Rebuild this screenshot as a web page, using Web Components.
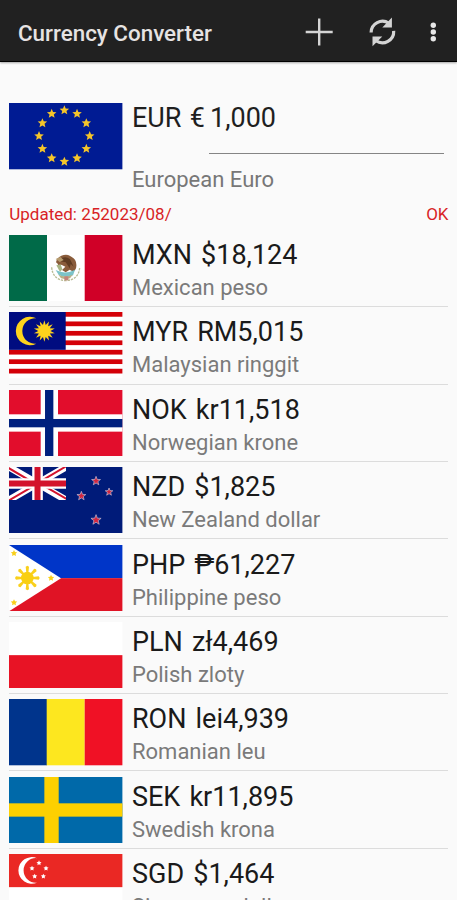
<!DOCTYPE html>
<html lang="en">
  <head>
    <meta charset="utf-8">
    <title>Currency Converter</title>
    <style>
      html, body { height: 100%; }
      body { margin: 0; overflow: hidden; background: #fafafa; font-family: Roboto, "Liberation Sans", sans-serif; }
      main { padding-top: 5.9px; }
    </style>
  </head>
  <body>
    <template id="app-bar-template">
      <style>
        :host { display: flex; align-items: center; box-sizing: border-box; height: 62px; padding: 4px 12px 0 18px;
          background: #212121; border-bottom: 1.5px solid #000; box-shadow: 0 1px 2px rgba(0, 0, 0, .35); color: #e6e3e3; }
        h1 { flex: 1; margin: 0; font-size: 22.4px; font-weight: 500; white-space: nowrap; }
        svg { display: block; flex: none; margin-bottom: 2px; }
      </style>
      <h1><slot></slot></h1>
      <svg width="64" height="40" viewBox="0 0 64 40"><path d="M32.2 6.5v27M18.7 20h27" stroke="#d4d4d4" stroke-width="2.4" fill="none"/></svg>
      <svg width="64" height="40" viewBox="0.7 0 64 40">
        <g fill="none" stroke="#d4d4d4" stroke-width="3.2">
          <path d="M20.8 20.6A11.4 11.4 0 0 1 38.6 11.2"/>
          <path d="M43.4 18.8A11.4 11.4 0 0 1 25.6 28.8"/>
        </g>
        <path fill="#d4d4d4" d="M41.6 5.6V15.4H32zM22.2 34.2V24.6H32z"/>
      </svg>
      <svg width="30" height="40" viewBox="0 0 30 40" fill="#e8e8e8">
        <circle cx="18.3" cy="13.2" r="2.7"/><circle cx="18.3" cy="20" r="2.7"/><circle cx="18.3" cy="26.8" r="2.7"/>
      </svg>
    </template>

    <template id="base-amount-template">
      <style>
        :host { display: grid; grid-template-columns: 113.4px 1fr; column-gap: 9.3px; padding: 41.3px 9px 0 9.3px; }
        .amount { display: flex; align-items: flex-start; height: 51px; font-size: 27px; line-height: 31px; color: #1f1f1f; white-space: pre; }
        .code { width: 77px; word-spacing: 1.5px; }
        .field { flex: 1; margin-right: 4px; padding-left: 1px; height: 50px; border-bottom: 1px solid #858585; }
        .name { margin-top: 12px; font-size: 22px; line-height: 27px; color: #777; }
      </style>
      <slot name="flag"></slot>
      <div>
        <div class="amount"><span class="code"><slot name="code"></slot></span><span class="field"><slot name="value"></slot></span></div>
        <div class="name"><slot name="name"></slot></div>
      </div>
    </template>

    <template id="update-status-template">
      <style>
        :host { display: flex; justify-content: space-between; height: 20px; margin-top: 10.7px; padding: 0 8.5px 0 9.3px;
          font-size: 17px; line-height: 20px; color: #d81f26; }
      </style>
      <span><slot></slot></span>
      <span><slot name="state"></slot></span>
    </template>

    <template id="currency-row-template">
      <style>
        :host { display: grid; grid-template-columns: 113.4px 1fr; column-gap: 9.3px; box-sizing: border-box; height: 77.37px;
          margin: 0 9px 0 9.3px; padding-top: 5.2px; border-bottom: 1.5px solid #dcdcdc; white-space: nowrap; }
        .amount { margin-top: 4px; font-size: 27px; line-height: 32px; color: #1a1a1a; word-spacing: 2.4px; }
        .name { margin-top: 4px; font-size: 22px; line-height: 26px; color: #7a7a7a; }
      </style>
      <currency-flag></currency-flag>
      <div>
        <div class="amount"><slot name="amount"></slot></div>
        <div class="name"><slot></slot></div>
      </div>
    </template>

    <app-bar>Currency Converter</app-bar>
    <base-amount>
      <currency-flag slot="flag" code="EUR"></currency-flag>
      <span slot="code">EUR €</span>
      <span slot="value">1,000</span>
      <span slot="name">European Euro</span>
    </base-amount>
    <update-status>Updated: 252023/08/<span slot="state">OK</span></update-status>
    <main>
      <currency-row code="MXN"><span slot="amount">MXN $18,124</span>Mexican peso</currency-row>
      <currency-row code="MYR"><span slot="amount">MYR RM5,015</span>Malaysian ringgit</currency-row>
      <currency-row code="NOK"><span slot="amount">NOK kr11,518</span>Norwegian krone</currency-row>
      <currency-row code="NZD"><span slot="amount">NZD $1,825</span>New Zealand dollar</currency-row>
      <currency-row code="PHP"><span slot="amount">PHP ₱61,227</span>Philippine peso</currency-row>
      <currency-row code="PLN"><span slot="amount">PLN zł4,469</span>Polish zloty</currency-row>
      <currency-row code="RON"><span slot="amount">RON lei4,939</span>Romanian leu</currency-row>
      <currency-row code="SEK"><span slot="amount">SEK kr11,895</span>Swedish krona</currency-row>
      <currency-row code="SGD"><span slot="amount">SGD $1,464</span>Singapore dollar</currency-row>
    </main>

    <script>
    // star polygon with n points around cx, cy
    function star(cx, cy, r, inner, n, attrs) {
      const points = [];
      for (let i = 0; i < n * 2; i++) {
        const a = Math.PI * i / n - Math.PI / 2;
        const d = i % 2 ? r * inner : r;
        points.push((cx + d * Math.cos(a)).toFixed(1) + ',' + (cy + d * Math.sin(a)).toFixed(1));
      }
      return `<polygon points="${points.join(' ')}" ${attrs}/>`;
    }

    function rect(x, y, w, h, fill) {
      return `<rect x="${x}" y="${y}" width="${w}" height="${h}" fill="${fill}"/>`;
    }

    // every flag is drawn on a 340 x 199 field
    const flags = {
      EUR() {
        let s = rect(0, 0, 340, 199, '#001b93');
        for (let i = 0; i < 12; i++) {
          const a = Math.PI * i / 6;
          s += star(166 + 76 * Math.sin(a), 99 - 77 * Math.cos(a), 15, .45, 5, 'fill="#f5c52a"');
        }
        return s;
      },
      MXN() {
        return rect(0, 0, 114, 199, '#006a48') + rect(114, 0, 113, 199, '#fff') + rect(227, 0, 113, 199, '#d00027') +
          `<path d="M128 97q3 38 42 40q39-2 42-40" fill="none" stroke="#b9bc94" stroke-width="4" stroke-dasharray="7 3"/>
          <path d="M141 82q2-14 16-20q18-6 30 3q15 8 15 24q1 14-9 21l-11-6-12 8-11-7 10-10-12-6-8 6-3-9z" fill="#8a5c3b"/>
          <path d="M158 69q14-6 25 4l11 22-9-8-3 13-12-18-16-3z" fill="#5f3c22"/>
          <path d="M140 72l14-6 10 9-12 6z" fill="#b59a6d"/>
          <path d="M142 91l13-3 5 15-7 8z" fill="#a9b585"/>
          <path d="M140 105q28 15 58-1l-6 17q-21 10-43-1z" fill="#7cc3c8"/>
          <path d="M148 119q22 11 43 0l-8 11q-13 5-27 0z" fill="#b9b084"/>
          <path d="M166 124h12v12h-12z" fill="#c4827a"/>`;
      },
      MYR() {
        let s = rect(0, 0, 340, 199, '#fff');
        for (let i = 0; i < 14; i += 2) s += rect(0, i * 14.2, 340, 14.2, '#d40008');
        return s + rect(0, 0, 170, 113.6, '#000c80') +
          '<path d="M82 19A42.5 42.5 0 1 0 82 95A38.2 38.2 0 1 1 82 19z" fill="#fdd31c"/>' +
          star(106, 57, 32, .57, 14, 'fill="#fdd31c"');
      },
      NOK() {
        return rect(0, 0, 340, 199, '#e20d2c') + rect(95, 0, 52, 199, '#fff') + rect(0, 73, 340, 52, '#fff') +
          rect(108, 0, 25, 199, '#00207e') + rect(0, 87, 340, 25, '#00207e');
      },
      NZD() {
        let s = rect(0, 0, 340, 199, '#001b79') +
          `<svg width="171" height="99" viewBox="0 0 171 99">
            <path d="M0 0L171 99M171 0L0 99" stroke="#fff" stroke-width="21"/>
            <path d="M-3 2L82 52M88 47L173-3M174 97L88 47M82 52L-3 102" stroke="#d3132c" stroke-width="6"/>
            <path d="M85.5 0V99M0 49.5H171" stroke="#fff" stroke-width="32"/>
            <path d="M85.5 0V99M0 49.5H171" stroke="#d3132c" stroke-width="18"/>
          </svg>`;
        [[261, 42, 14], [300, 75, 12], [217, 87, 14], [261, 159, 16]].forEach(([x, y, r]) => {
          s += star(x, y, r, .42, 5, 'fill="#d3253f" stroke="#c3c5de" stroke-width="2"');
        });
        return s;
      },
      PHP() {
        let s = rect(0, 0, 340, 99.5, '#0035c8') + rect(0, 99.5, 340, 99.5, '#e01325') +
          '<path d="M0 0L156 99.5L0 199z" fill="#fff"/>';
        for (let i = 0; i < 8; i++) {
          s += `<path d="M52 84L50 65L55 62L60 65L58 84z" fill="#f9d01c" transform="rotate(${i * 45} 55 99)"/>`;
        }
        s += '<circle cx="55" cy="99" r="19" fill="#f9cf12"/>';
        [[15, 25], [126, 99], [15, 173]].forEach(([x, y]) => { s += star(x, y, 10, .5, 5, 'fill="#f9d01c"'); });
        return s;
      },
      PLN() { return rect(0, 0, 340, 199, '#fff') + rect(0, 99.5, 340, 99.5, '#e81325'); },
      RON() { return rect(0, 0, 114, 199, '#00348c') + rect(113, 0, 114, 199, '#fde71f') + rect(227, 0, 113, 199, '#f01125'); },
      SEK() { return rect(0, 0, 340, 199, '#0069a9') + rect(106, 0, 43, 199, '#fdd000') + rect(0, 79, 340, 40, '#fdd000'); },
      SGD() {
        let s = rect(0, 0, 340, 199, '#fff') + rect(0, 0, 340, 99.5, '#ea2824') +
          '<path d="M84 12.5A40 40 0 1 0 84 86A36.9 36.9 0 1 1 84 12.5z" fill="#fff"/>';
        [[90, 27], [69, 43], [111, 43], [77, 67], [103, 67]].forEach(([x, y]) => { s += star(x, y, 8, .5, 5, 'fill="#fff"'); });
        return s;
      }
    };

    function attach(element, id) {
      const content = document.getElementById(id).content;
      element.attachShadow({mode: 'open'}).appendChild(content.cloneNode(true));
    }

    customElements.define('currency-flag',
      class extends HTMLElement {
        static get observedAttributes() { return ['code']; }
        constructor() {
          super();
          this.attachShadow({mode: 'open'});
        }
        attributeChangedCallback(name, old, code) {
          this.shadowRoot.innerHTML = `
            <style>
              :host { display: block; width: 113.4px; height: 66.3px; }
              svg { display: block; }
            </style>
            <svg width="113.4" height="66.3" viewBox="0 0 340 199" preserveAspectRatio="none">${flags[code]()}</svg>`;
        }
      });

    customElements.define('app-bar', class extends HTMLElement {
      constructor() { super(); attach(this, 'app-bar-template'); }
    });

    customElements.define('base-amount', class extends HTMLElement {
      constructor() { super(); attach(this, 'base-amount-template'); }
    });

    customElements.define('update-status', class extends HTMLElement {
      constructor() { super(); attach(this, 'update-status-template'); }
    });

    customElements.define('currency-row',
      class extends HTMLElement {
        constructor() {
          super();
          attach(this, 'currency-row-template');
          this.shadowRoot.querySelector('currency-flag').setAttribute('code', this.getAttribute('code'));
        }
      });
    </script>
  </body>
</html>
